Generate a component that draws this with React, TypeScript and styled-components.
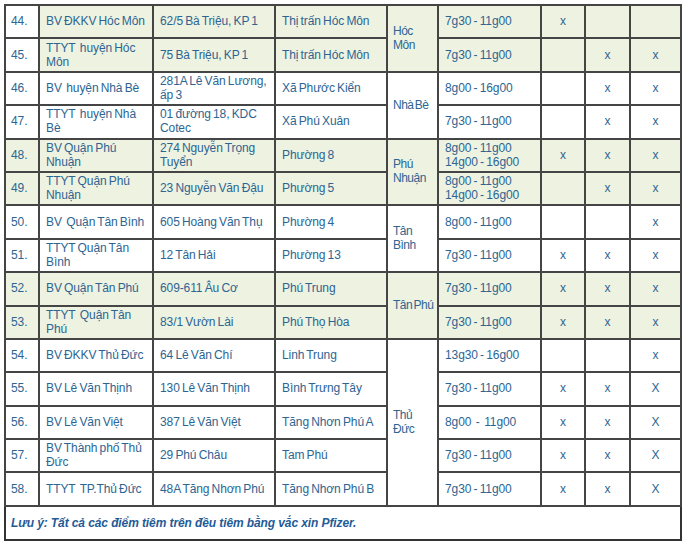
import styled, { createGlobalStyle } from 'styled-components'

const GlobalStyle = createGlobalStyle`
    html, body {
        margin: 0;
        padding: 0;
        background: #fff;
    }
`

const Page = styled.div`
    padding: 4px 0 0 4px;
`

const Table = styled.table`
    width: 676px;
    table-layout: fixed;
    border-collapse: collapse;
    font-family: 'Liberation Sans', Arial, sans-serif;
    font-size: 12px;
    line-height: 14px;
    letter-spacing: -0.1px;
    word-spacing: -1px;
    color: #2d6592;
    border: 2px solid #333;
`

const Row = styled.tr`
    height: 33.4px;
`

const Cell = styled.td<{ $shade?: boolean; $center?: boolean }>`
    border: 2px solid #454545;
    padding: 0 1px 1px 6px;
    vertical-align: middle;
    white-space: pre-wrap;
    text-align: ${(p) => (p.$center ? 'center' : 'left')};
    background: ${(p) => (p.$shade ? '#eef2e1' : '#fff')};
`

const MarkCell = styled(Cell)`
    padding: 0 0 1px;
`

const NumCell = styled(Cell)`
    padding-left: 5px;
`

const DistrictCell = styled(Cell)`
    padding: 0 0 1px 5px;
    letter-spacing: -0.5px;
    word-spacing: -1.5px;
`

const NoteCell = styled.td`
    border: 2px solid #333;
    padding: 0 5px;
    height: 32px;
    font-weight: bold;
    font-style: italic;
    word-spacing: 0;
    color: #1f5b96;
`

type Entry = {
    no: string
    name: string
    addr: string
    ward: string
    time: string
    marks: [string, string, string]
    shade?: boolean
    numShade?: boolean
    district?: { name: string; span: number; shade?: boolean }
}

const rows: Entry[] = [
    { no: '44.', name: 'BV ĐKKV Hóc Môn', addr: '62/5 Bà Triệu, KP 1', ward: 'Thị trấn Hóc Môn', time: '7g30 - 11g00', marks: ['x', '', ''], shade: true, district: { name: 'Hóc\nMôn', span: 2, shade: true } },
    { no: '45.', name: 'TTYT  huyện Hóc Môn', addr: '75 Bà Triệu, KP 1', ward: 'Thị trấn Hóc Môn', time: '7g30 - 11g00', marks: ['', 'x', 'x'], shade: true },
    { no: '46.', name: 'BV  huyện Nhà Bè', addr: '281A Lê Văn Lương, ấp 3', ward: 'Xã Phước Kiển', time: '8g00 - 16g00', marks: ['', 'x', 'x'], district: { name: 'Nhà\u00a0Bè', span: 2 } },
    { no: '47.', name: 'TTYT  huyện Nhà Bè', addr: '01 đường 18, KDC Cotec', ward: 'Xã Phú Xuân', time: '7g30 - 11g00', marks: ['', 'x', 'x'] },
    { no: '48.', name: 'BV Quận Phú Nhuận', addr: '274 Nguyễn Trọng Tuyển', ward: 'Phường 8', time: '8g00 - 11g00\n14g00 - 16g00', marks: ['x', 'x', 'x'], shade: true, numShade: true, district: { name: 'Phú\nNhuận', span: 2, shade: true } },
    { no: '49.', name: 'TTYT Quận Phú Nhuận', addr: '23 Nguyễn Văn Đậu', ward: 'Phường 5', time: '8g00 - 11g00\n14g00 - 16g00', marks: ['', 'x', 'x'], shade: true, numShade: true },
    { no: '50.', name: 'BV  Quận Tân Bình', addr: '605 Hoàng Văn Thụ', ward: 'Phường 4', time: '8g00 - 11g00', marks: ['', '', 'x'], district: { name: 'Tân\nBình', span: 2 } },
    { no: '51.', name: 'TTYT Quận Tân Bình', addr: '12 Tân Hải', ward: 'Phường 13', time: '7g30 - 11g00', marks: ['x', 'x', 'x'] },
    { no: '52.', name: 'BV Quận Tân Phú', addr: '609-611 Âu Cơ', ward: 'Phú Trung', time: '7g30 - 11g00', marks: ['x', 'x', 'x'], shade: true, numShade: true, district: { name: 'Tân\u00a0Phú', span: 2, shade: true } },
    { no: '53.', name: 'TTYT  Quận Tân Phú', addr: '83/1 Vườn Lài', ward: 'Phú Thọ Hòa', time: '7g30 - 11g00', marks: ['x', 'x', 'x'], shade: true, numShade: true },
    { no: '54.', name: 'BV ĐKKV Thủ Đức', addr: '64 Lê Văn Chí', ward: 'Linh Trung', time: '13g30 - 16g00', marks: ['', '', 'x'], district: { name: 'Thủ\nĐức', span: 5 } },
    { no: '55.', name: 'BV Lê Văn Thịnh', addr: '130 Lê Văn Thịnh', ward: 'Bình Trưng Tây', time: '7g30 - 11g00', marks: ['x', 'x', 'X'] },
    { no: '56.', name: 'BV Lê Văn Việt', addr: '387 Lê Văn Việt', ward: 'Tăng Nhơn Phú A', time: '8g00  -  11g00', marks: ['x', 'x', 'X'] },
    { no: '57.', name: 'BV Thành phố Thủ Đức', addr: '29 Phú Châu', ward: 'Tam Phú', time: '7g30 - 11g00', marks: ['x', 'x', 'X'] },
    { no: '58.', name: 'TTYT  TP.Thủ Đức', addr: '48A Tăng Nhơn Phú', ward: 'Tăng Nhơn Phú B', time: '7g30 - 11g00', marks: ['x', 'x', 'X'] },
]

const widths = [34, 114, 122, 112, 51, 103, 44, 45, 51]

export default function App() {
    return (
        <Page>
            <GlobalStyle />
            <Table>
                <colgroup>
                    {widths.map((w, i) => (
                        <col key={i} style={{ width: w }} />
                    ))}
                </colgroup>
                <tbody>
                    {rows.map((r) => (
                        <Row key={r.no}>
                            <NumCell $shade={r.numShade}>{r.no}</NumCell>
                            <Cell $shade={r.shade}>{r.name}</Cell>
                            <Cell $shade={r.shade}>{r.addr}</Cell>
                            <Cell $shade={r.shade}>{r.ward}</Cell>
                            {r.district && (
                                <DistrictCell rowSpan={r.district.span} $shade={r.district.shade}>
                                    {r.district.name}
                                </DistrictCell>
                            )}
                            <Cell $shade={r.shade}>{r.time}</Cell>
                            {r.marks.map((m, i) => (
                                <MarkCell key={i} $shade={r.shade} $center>
                                    {m}
                                </MarkCell>
                            ))}
                        </Row>
                    ))}
                    <tr>
                        <NoteCell colSpan={9}>
                            Lưu ý: Tất cả các điểm tiêm trên đều tiêm bằng vắc xin Pfizer.
                        </NoteCell>
                    </tr>
                </tbody>
            </Table>
        </Page>
    )
}
